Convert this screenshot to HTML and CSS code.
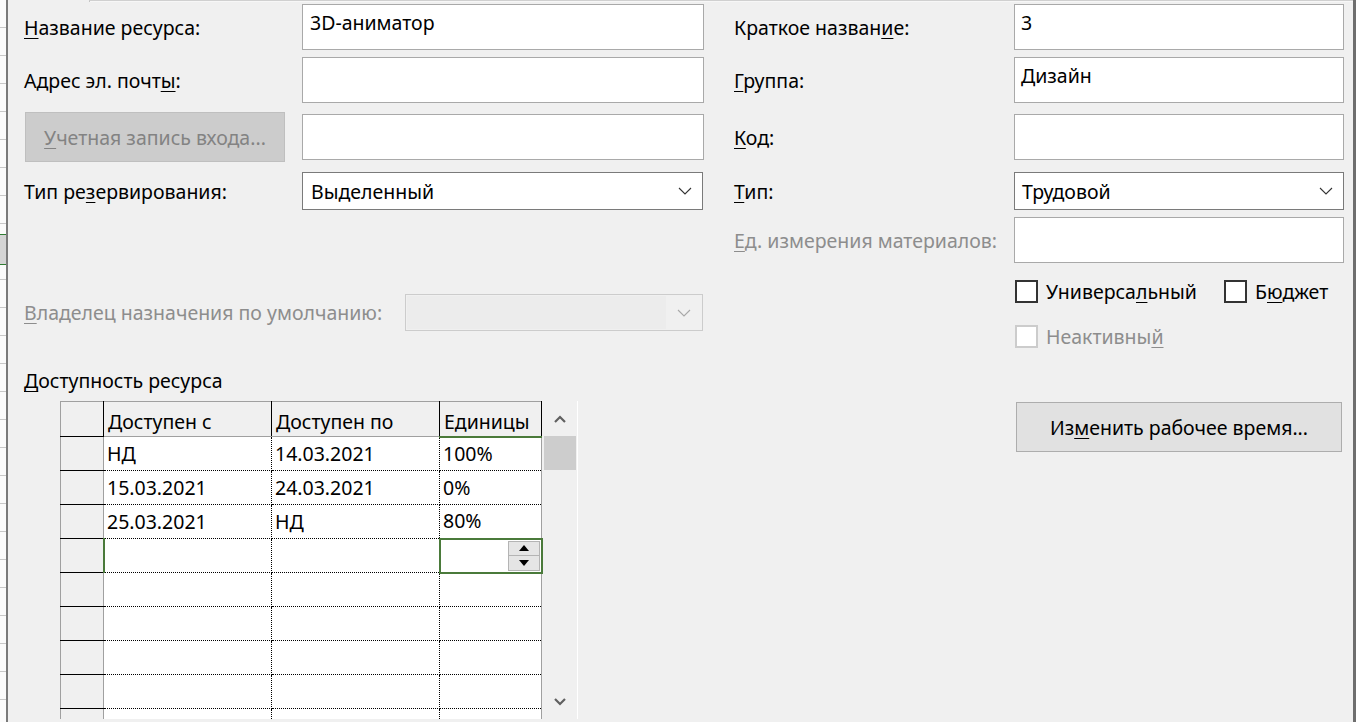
FILE: index.html
```html
<!DOCTYPE html>
<html lang="ru">
<head>
<meta charset="utf-8">
<title>Сведения о ресурсе</title>
<link rel="stylesheet" href="styles.css">
</head>
<body>
<div class="app">
  <div class="sheet-strip"></div>
  <div class="dialog">
    <div class="tabline"><div class="tab-stub"></div><div class="tab-rest"></div></div>
    <div class="columns">
      <div class="col-left">
        <div class="row r1">
          <label class="lbl"><u>Н</u>азвание ресурса:</label>
          <div class="field"><span>3D-аниматор</span></div>
        </div>
        <div class="row r2">
          <label class="lbl">Адрес эл. почт<u>ы</u>:</label>
          <div class="field"></div>
        </div>
        <div class="row r3">
          <div class="btn-disabled"><u>У</u>четная запись входа...</div>
          <div class="field"></div>
        </div>
        <div class="row r4">
          <label class="lbl">Тип ре<u>з</u>ервирования:</label>
          <div class="select"><span>Выделенный</span><svg class="chev" width="14" height="8" viewBox="0 0 14 8"><path d="M1 1l6 6 6-6" fill="none" stroke="#333" stroke-width="1.1"/></svg></div>
        </div>
        <div class="row r5">
          <label class="lbl dis"><u>В</u>ладелец назначения по умолчанию:</label>
          <div class="select select-dis"><span class="sd-body"></span><span class="sd-btn"><svg class="chev" width="14" height="8" viewBox="0 0 14 8"><path d="M1 1l6 6 6-6" fill="none" stroke="#a8a8a8" stroke-width="1.1"/></svg></span></div>
        </div>
        <div class="section-title"><u>Д</u>оступность ресурса</div>
        <div class="grid-wrap">
          <table class="grid">
            <colgroup><col class="c0"><col class="c1"><col class="c2"><col class="c3"></colgroup>
            <thead>
              <tr><th class="rh"></th><th>Доступен с</th><th>Доступен по</th><th class="sel-col">Единицы</th></tr>
            </thead>
            <tbody>
              <tr><td class="rh"></td><td>НД</td><td>14.03.2021</td><td>100%</td></tr>
              <tr><td class="rh"></td><td>15.03.2021</td><td>24.03.2021</td><td>0%</td></tr>
              <tr><td class="rh"></td><td>25.03.2021</td><td>НД</td><td>80%</td></tr>
              <tr class="active-row"><td class="rh"></td><td></td><td></td><td class="active-cell"><div class="spin"><span class="sp-up"><svg width="10" height="6" viewBox="0 0 10 6"><path d="M5 0L10 6H0z" fill="#000"/></svg></span><span class="sp-dn"><svg width="10" height="6" viewBox="0 0 10 6"><path d="M0 0H10L5 6z" fill="#000"/></svg></span></div></td></tr>
              <tr><td class="rh"></td><td></td><td></td><td></td></tr>
              <tr><td class="rh"></td><td></td><td></td><td></td></tr>
              <tr><td class="rh"></td><td></td><td></td><td></td></tr>
              <tr><td class="rh"></td><td></td><td></td><td></td></tr>
              <tr><td class="rh"></td><td></td><td></td><td></td></tr>
            </tbody>
          </table>
          <div class="vscroll">
            <div class="sb-arrow"><svg width="12" height="8" viewBox="0 0 12 8"><path d="M1 7l5-5 5 5" fill="none" stroke="#606060" stroke-width="2.2"/></svg></div>
            <div class="sb-thumb"></div>
            <div class="sb-track"></div>
            <div class="sb-arrow"><svg width="12" height="8" viewBox="0 0 12 8"><path d="M1 1l5 5 5-5" fill="none" stroke="#606060" stroke-width="2.2"/></svg></div>
          </div>
        </div>
      </div>
      <div class="col-right">
        <div class="row q1">
          <label class="lbl">Краткое назван<u>и</u>е:</label>
          <div class="field fr"><span>3</span></div>
        </div>
        <div class="row q2">
          <label class="lbl"><u>Г</u>руппа:</label>
          <div class="field fr"><span>Дизайн</span></div>
        </div>
        <div class="row q3">
          <label class="lbl"><u>К</u>од:</label>
          <div class="field fr"></div>
        </div>
        <div class="row q4">
          <label class="lbl"><u>Т</u>ип:</label>
          <div class="select fr"><span>Трудовой</span><svg class="chev" width="14" height="8" viewBox="0 0 14 8"><path d="M1 1l6 6 6-6" fill="none" stroke="#333" stroke-width="1.1"/></svg></div>
        </div>
        <div class="row q5">
          <label class="lbl dis"><u>Е</u>д. измерения материалов:</label>
          <div class="field fr"></div>
        </div>
        <div class="checks q6">
          <div class="check c-univ"><span class="box"></span><span>Универса<u>л</u>ьный</span></div>
          <div class="check"><span class="box"></span><span>Б<u>ю</u>джет</span></div>
        </div>
        <div class="checks q7">
          <div class="check dis"><span class="box box-dis"></span><span>Неактивны<u>й</u></span></div>
        </div>
        <div class="q8">
          <div class="btn">Из<u>м</u>енить рабочее время...</div>
        </div>
      </div>
    </div>
  </div>
</div>
</body>
</html>
```
FILE: styles.css
```css
* { box-sizing: border-box; }
html, body { margin: 0; padding: 0; }
body {
  width: 1356px;
  height: 722px;
  overflow: hidden;
  background: #ffffff;
  font-family: "Noto Sans", "Open Sans", sans-serif;
  font-size: 19.5px;
  color: #000;
}
u { text-decoration-thickness: 1px; text-underline-offset: 3px; }

.app { display: flex; height: 722px; }

.sheet-strip {
  width: 6px;
  flex: none;
  background:
    repeating-linear-gradient(to bottom, #fbfbfb 0, #fbfbfb 27px, #c8c8c8 27px, #c8c8c8 28px);
  background-color: #fbfbfb;
  position: relative;
}
.sheet-strip::after {
  content: "";
  position: absolute;
  left: 0; right: 0;
  top: 234px; height: 29px;
  border-top: 1px solid #2f7d32;
  border-bottom: 1px solid #2f7d32;
  background: #d4d4d4;
}

.dialog {
  flex: 1;
  background: #f0f0f0;
  border-left: 2px solid #7a7a7a;
  border-right: 3px solid #6e6e6e;
  display: flex;
  flex-direction: column;
}
.tabline { height: 3px; display: flex; }
.tab-stub { width: 81px; }
.tab-rest { flex: 1; border-left: 1px solid #c4c4c4; border-top: 1px solid #d0d0d0; background: #f7f7f7; height: 2px; }

.columns { display: flex; margin-top: 1px; }
.col-left { width: 696px; padding-left: 16px; display: flex; flex-direction: column; flex: none; }
.col-right { flex: 1; padding-left: 30px; padding-right: 9px; display: flex; flex-direction: column; }

.row { display: flex; align-items: center; justify-content: space-between; }
.lbl { white-space: nowrap; }
.dis { color: #8d8d8d; }

.field {
  width: 402px;
  height: 46px;
  background: #fff;
  border: 1px solid #a9a9a9;
  padding: 5px 7px;
  line-height: 26px;
  white-space: nowrap;
}
.field.fr { width: 330px; padding-left: 6px; }

.r1 { height: 46px; margin-top: 0; }
.r2 { height: 46px; margin-top: 7px; }
.r3 { height: 50px; margin-top: 9px; }
.r4 { height: 38px; margin-top: 10px; }
.r5 { height: 37px; margin-top: 84px; }

.btn-disabled {
  width: 260px;
  height: 50px;
  margin-left: 1px;
  background: #cccccc;
  border: 1px solid #bfbfbf;
  color: #838383;
  display: flex;
  align-items: center;
  justify-content: center;
  white-space: nowrap;
}

.select {
  width: 401px;
  height: 38px;
  margin-right: 1px;
  background: #fff;
  border: 1px solid #7a7a7a;
  display: flex;
  align-items: center;
  justify-content: space-between;
  padding: 0 10px 0 8px;
}
.select.fr { width: 330px; margin-right: 0; padding-left: 7px; }
.select-dis {
  width: 298px;
  height: 37px;
  background: #f0f0f0;
  border: 1px solid #cccccc;
  padding: 0;
  align-items: stretch;
}
.sd-body { flex: 1; background: #ececec; margin: 1px 0 1px 1px; }
.sd-btn { width: 36px; display: flex; align-items: center; justify-content: center; }

.section-title { margin-top: 37px; height: 26px; line-height: 26px; }

.grid-wrap {
  margin-top: 7px;
  margin-left: 36px;
  height: 318px;
  display: flex;
  overflow: hidden;
  align-self: flex-start;
}
.grid {
  border-collapse: collapse;
  table-layout: fixed;
  width: 481px;
  border-left: 1px solid #a0a0a0;
}
.c0 { width: 43px; }
.c1 { width: 168px; }
.c2 { width: 168px; }
.c3 { width: 102px; }

.grid th {
  height: 35px;
  background: #f0f0f0;
  font-weight: normal;
  text-align: left;
  vertical-align: bottom;
  padding: 0 4px 0;
  border-top: 1px solid #a0a0a0;
  border-right: 1px solid #000;
  border-bottom: 1px solid #a0a0a0;
  white-space: nowrap;
  line-height: 28px;
}
.grid th.rh { border-bottom: 1px solid #000; }
.grid th.sel-col { border-bottom: 2px solid #4a7a3a; }

.grid td {
  height: 34px;
  background: #fff;
  padding: 0 3px;
  border-right: 1px dotted #000;
  border-bottom: 1px dotted #000;
  white-space: nowrap;
  line-height: 26px;
  vertical-align: middle;
}
.grid td.rh {
  background: #f0f0f0;
  border-right: 1px solid #a0a0a0;
  border-bottom: 1px solid #000;
}
.grid td:last-child { border-right: 1px solid #a0a0a0; }
.grid tr.active-row td.rh { border-right: 2px solid #4a7a3a; }
.grid td.active-cell {
  position: relative;
  border: 2px solid #4a7a3a;
}
.spin {
  position: absolute;
  right: 1px;
  top: 1px;
  width: 32px;
  height: 30px;
  display: flex;
  flex-direction: column;
}
.spin span {
  flex: 1;
  background: #e5e5e5;
  border: 1px solid #b4b4b4;
  display: flex;
  align-items: center;
  justify-content: center;
}
.spin .sp-dn { border-top: none; }

.vscroll {
  width: 35px;
  flex: none;
  background: #f0f0f0;
  border-right: 1px solid #ffffff;
  display: flex;
  flex-direction: column;
  padding: 0 1px;
}
.sb-arrow { height: 35px; display: flex; align-items: center; justify-content: center; flex: none; }
.sb-thumb { height: 34px; background: #cdcdcd; flex: none; }
.sb-track { flex: 1; }

.q1 { height: 46px; }
.q2 { height: 46px; margin-top: 7px; }
.q3 { height: 46px; margin-top: 11px; }
.q4 { height: 38px; margin-top: 12px; }
.q5 { height: 46px; margin-top: 7px; }

.checks { display: flex; margin-left: 281px; height: 23px; align-items: center; }
.q6 { margin-top: 17px; }
.q7 { margin-top: 22px; }
.check { display: flex; align-items: center; gap: 8px; white-space: nowrap; }
.c-univ { width: 209px; }
.box { width: 23px; height: 23px; border: 2px solid #333; background: #fff; flex: none; }
.box-dis { border-color: #cccccc; }

.q8 { margin-top: 54px; margin-left: 282px; }
.btn {
  width: 326px;
  height: 50px;
  background: #e1e1e1;
  border: 1px solid #adadad;
  display: flex;
  align-items: center;
  justify-content: center;
  white-space: nowrap;
}
```
